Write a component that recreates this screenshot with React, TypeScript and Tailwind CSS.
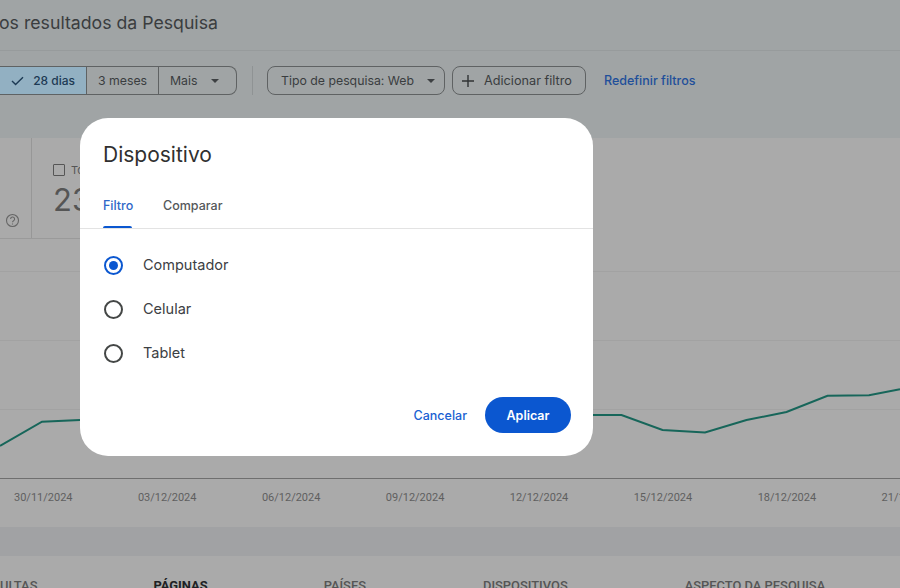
const googleFont = "font-['Inter','Liberation_Sans',sans-serif]";

function Caret() {
  return <svg width="8" height="4" viewBox="0 0 8 4" className="shrink-0"><path d="M0 0h8L4 4z" fill="#3d4043" /></svg>;
}

function Radio({ on, label }: { on?: boolean; label: string }) {
  return (
    <div className="flex h-11 items-center pl-[24px]">
      <span className={`flex h-[19px] w-[19px] items-center justify-center rounded-full border-2 ${on ? "border-[#0b57d0]" : "border-[#444746]"}`}>
        {on && <span className="h-[9px] w-[9px] rounded-full bg-[#0b57d0]" />}
      </span>
      <span className="ml-[20px] text-[14.5px] text-[#3c4043]">{label}</span>
    </div>
  );
}

const dates = ["30/11/2024", "03/12/2024", "06/12/2024", "09/12/2024", "12/12/2024", "15/12/2024", "18/12/2024", "21/12/2024"];

export default function App() {
  return (
    <div className={`relative h-[588px] w-[900px] overflow-hidden bg-[#a0a4a5] ${googleFont}`}>
      {/* Header */}
      <div className="flex h-[51px] items-center overflow-hidden border-b border-[#979b9c] pb-[3px]">
        <h1 className="ml-[-1px] whitespace-nowrap text-[17.7px] text-[#3a3d3f]">os resultados da Pesquisa</h1>
      </div>
      {/* Filters */}
      <div className="flex h-[87px] items-start pt-[15px]">
        <div className="flex h-[29px] items-stretch overflow-hidden rounded-r-lg border border-l-0 border-[#5f6263] pt-0 text-[12.3px] text-[#3a3d3f]">
          <div className="flex w-[87px] items-center justify-end gap-[9px] border-r border-[#5f6263] bg-[#92b0c2] pr-[11px] pt-px text-[12px] font-medium text-[#1d3a54]">
            <svg width="13" height="10" viewBox="0 0 13 10"><path d="M1 5l3.6 3.6L12 1.2" fill="none" stroke="#1d3a54" strokeWidth="1.4" /></svg>
            <span>28 dias</span>
          </div>
          <div className="flex w-[72px] items-center justify-center border-r border-[#5f6263] pt-px">3 meses</div>
          <div className="flex w-[77px] items-center gap-[14px] pl-[11px] pt-px">Mais<Caret /></div>
        </div>
        <div className="ml-[15px] h-[29px] w-px bg-[#8f9394]" />
        <div className="ml-[14px] flex h-[29px] w-[178px] items-center gap-[13px] rounded-lg border border-[#5f6263] pl-[13px] pt-px text-[12.3px] text-[#3a3d3f]">
          <span className="whitespace-nowrap">Tipo de pesquisa: Web</span><Caret />
        </div>
        <div className="ml-[7px] flex h-[29px] w-[134px] items-center rounded-lg border border-[#5f6263] pl-[9px] pt-px text-[12.7px] text-[#3a3d3f]">
          <svg width="12" height="12" viewBox="0 0 12 12"><path d="M6 0v12M0 6h12" stroke="#303335" strokeWidth="1.4" /></svg>
          <span className="ml-[10px] whitespace-nowrap">Adicionar filtro</span>
        </div>
        <span className="ml-[18px] mt-[6px] whitespace-nowrap text-[12.5px] font-medium text-[#1f4f9a]">Redefinir filtros</span>
      </div>
      {/* Chart card */}
      <div className="h-[389px] bg-[#aaaaaa]">
        <div className="flex h-[101px] w-[300px] border-b border-[#9a9a9a]">
          <div className="relative h-full w-[32px] border-r border-[#979797]">
            <svg className="absolute left-[5px] top-[75px]" width="15" height="15" viewBox="0 0 15 15" fill="none" stroke="#666" strokeWidth="1.1">
              <circle cx="7.5" cy="7.5" r="6" /><path d="M5.6 6a2 2 0 1 1 3 1.700c-.7.4-1.100.8-1.100 1.600M7.500 10.600v1" />
            </svg>
          </div>
          <div className="relative w-[48px] overflow-hidden pl-[21px] text-[#555]">
            <div className="mt-[24px] flex items-center gap-[6px]">
              <span className="h-[12px] w-[12px] shrink-0 rounded-[1px] border border-[#555]" />
              <span className="text-[11px]">To</span>
            </div>
            <div className="mt-[3px] text-[31px] leading-9">23</div>
          </div>
        </div>
        <div className="relative h-[240px]">
          <div className="absolute left-0 right-0 top-[32px] h-px bg-[#a2a2a2]" />
          <div className="absolute left-0 right-0 top-[101px] h-px bg-[#a2a2a2]" />
          <div className="absolute left-0 right-0 top-[170px] h-px bg-[#a2a2a2]" />
          <div className="absolute bottom-0 left-0 right-0 h-px bg-[#6f6f6f]" />
          <svg className="absolute inset-0" width="900" height="240" viewBox="0 239 900 240" fill="none">
            <path d="M0 446L42 421.700L80 420M592 415H621.500L662.500 430L705 432.500L746.500 420L786.500 412L827.500 395.700L869 395.300L900 389.300" stroke="#17665a" strokeWidth="2" />
          </svg>
        </div>
        <div className="relative flex h-[48px] font-['Roboto',sans-serif] text-[11px] text-[#5f5f5f]">
          {dates.map((d, i) => (
            <span key={d} className={`whitespace-nowrap pt-[11px] ${i === 0 ? "ml-[14px]" : "ml-[65.4px]"}`}>{d}</span>
          ))}
        </div>
      </div>
      {/* Band */}
      <div className="h-[29px] bg-[#a1a2a4]" />
      {/* Tabs */}
      <div className="relative flex h-[32px] whitespace-nowrap bg-[#aaaaaa] pt-[20px] font-['Roboto',sans-serif] text-[12.9px] font-medium text-[#555]">
        <span>ULTAS</span>
        <span className="ml-[116px] font-bold text-[#202124]">PÁGINAS</span>
        <span className="ml-[116px]">PAÍSES</span>
        <span className="ml-[117px]">DISPOSITIVOS</span>
        <span className="ml-[117px]">ASPECTO DA PESQUISA</span>
      </div>
      {/* Dialog */}
      <div className="absolute left-[80px] top-[118px] h-[338px] w-[513px] rounded-[28px] bg-white">
        <h2 className="pl-[23px] pt-[23px] text-[21px] leading-7 text-[#303030]">Dispositivo</h2>
        <div className="mt-[21px] flex h-[39px] items-start border-b border-[#e3e3e3] pl-[23px] pt-[7px] text-[12.5px] font-medium">
          <div className="relative h-full w-[31px] text-[#2f68c8]">
            Filtro
            <span className="absolute bottom-0 left-0 h-[2.5px] w-[29px] rounded-t-sm bg-[#0b57d0]" />
          </div>
          <span className="ml-[29px] text-[#55585a]">Comparar</span>
        </div>
        <div className="pt-[14px]">
          <Radio on label="Computador" />
          <Radio label="Celular" />
          <Radio label="Tablet" />
        </div>
        <div className="mt-[22px] flex items-center justify-end pr-[22px]">
          <span className="pt-[3px] text-[12.5px] font-medium text-[#1a62d2]">Cancelar</span>
          <span className="ml-[18px] flex h-[36px] w-[86px] items-center justify-center rounded-full bg-[#0b57d0] pt-[2px] text-[12.5px] font-semibold text-white">Aplicar</span>
        </div>
      </div>
    </div>
  );
}
